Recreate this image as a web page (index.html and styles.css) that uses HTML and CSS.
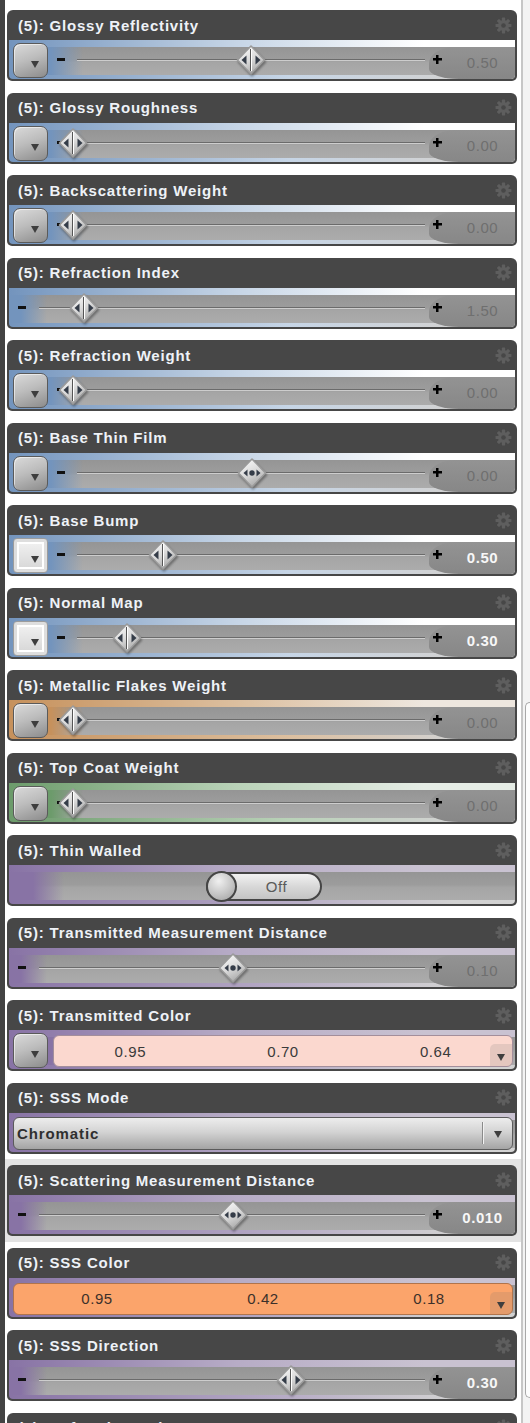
FILE: index.html
```html
<!DOCTYPE html>
<html>
<head>
<meta charset="utf-8">
<link rel="stylesheet" href="styles.css">
</head>
<body>
<svg class="defs" width="0" height="0" aria-hidden="true">
  <defs>
    <linearGradient id="kg" x1="0.2" y1="0" x2="0.7" y2="1">
      <stop offset="0" stop-color="#fafafa"/>
      <stop offset="0.5" stop-color="#dadada"/>
      <stop offset="1" stop-color="#a3a3a3"/>
    </linearGradient>
    <symbol id="knob" viewBox="0 0 30 32">
      <path d="M15 2 L28.5 16 L15 30 L1.5 16 Z" fill="url(#kg)" stroke="#9a9a9a" stroke-width="1.6" stroke-linejoin="round"/>
      <path d="M5.5 16 L10.5 11.5 L10.5 20.5 Z" fill="#343c48"/>
      <path d="M24.5 16 L19.5 11.5 L19.5 20.5 Z" fill="#343c48"/>
      <line x1="14.5" y1="5" x2="14.5" y2="27" stroke="#555" stroke-width="1"/>
      <line x1="15.5" y1="5" x2="15.5" y2="27" stroke="#fff" stroke-width="1"/>
    </symbol>
    <symbol id="knobdot" viewBox="0 0 30 32">
      <path d="M15 2 L28.5 16 L15 30 L1.5 16 Z" fill="url(#kg)" stroke="#9a9a9a" stroke-width="1.6" stroke-linejoin="round"/>
      <path d="M6.5 16 L10.5 12.5 L10.5 19.5 Z" fill="#343c48"/>
      <path d="M23.5 16 L19.5 12.5 L19.5 19.5 Z" fill="#343c48"/>
      <circle cx="15" cy="16" r="2.7" fill="#343c48"/>
    </symbol>
    <symbol id="gear" viewBox="-9 -9 18 18">
      <g fill="#5e5e5e">
        <circle r="5.8"/>
        <rect x="-1.7" y="-8.4" width="3.4" height="16.8" rx="0.6"/>
        <rect x="-1.7" y="-8.4" width="3.4" height="16.8" rx="0.6" transform="rotate(45)"/>
        <rect x="-1.7" y="-8.4" width="3.4" height="16.8" rx="0.6" transform="rotate(90)"/>
        <rect x="-1.7" y="-8.4" width="3.4" height="16.8" rx="0.6" transform="rotate(135)"/>
      </g>
      <circle r="2.4" fill="#474747"/>
    </symbol>
  </defs>
</svg>

<div class="app">
  <div class="lstrip"></div>
  <div class="list">

    <div class="row"><div class="card blue">
      <div class="hd"><span class="title">(5): Glossy Reflectivity</span><svg class="gear"><use href="#gear"/></svg></div>
      <div class="bd slider">
        <div class="ddbtn"><i class="tri"></i></div>
        <span class="minus"></span>
        <div class="track"><svg class="knob" style="left:50%"><use href="#knob"/></svg></div>
        <div class="vwrap"><span class="plus"></span><span class="val">0.50</span></div>
      </div>
    </div></div>

    <div class="row"><div class="card blue">
      <div class="hd"><span class="title">(5): Glossy Roughness</span><svg class="gear"><use href="#gear"/></svg></div>
      <div class="bd slider">
        <div class="ddbtn"><i class="tri"></i></div>
        <span class="minus"></span>
        <div class="track"><svg class="knob" style="left:0%"><use href="#knob"/></svg></div>
        <div class="vwrap"><span class="plus"></span><span class="val">0.00</span></div>
      </div>
    </div></div>

    <div class="row"><div class="card blue">
      <div class="hd"><span class="title">(5): Backscattering Weight</span><svg class="gear"><use href="#gear"/></svg></div>
      <div class="bd slider">
        <div class="ddbtn"><i class="tri"></i></div>
        <span class="minus"></span>
        <div class="track"><svg class="knob" style="left:0%"><use href="#knob"/></svg></div>
        <div class="vwrap"><span class="plus"></span><span class="val">0.00</span></div>
      </div>
    </div></div>

    <div class="row"><div class="card blue">
      <div class="hd"><span class="title">(5): Refraction Index</span><svg class="gear"><use href="#gear"/></svg></div>
      <div class="bd slider nob">
        <span class="minus"></span>
        <div class="track"><svg class="knob" style="left:12.4%"><use href="#knob"/></svg></div>
        <div class="vwrap"><span class="plus"></span><span class="val">1.50</span></div>
      </div>
    </div></div>

    <div class="row"><div class="card blue">
      <div class="hd"><span class="title">(5): Refraction Weight</span><svg class="gear"><use href="#gear"/></svg></div>
      <div class="bd slider">
        <div class="ddbtn"><i class="tri"></i></div>
        <span class="minus"></span>
        <div class="track"><svg class="knob" style="left:0%"><use href="#knob"/></svg></div>
        <div class="vwrap"><span class="plus"></span><span class="val">0.00</span></div>
      </div>
    </div></div>

    <div class="row"><div class="card blue">
      <div class="hd"><span class="title">(5): Base Thin Film</span><svg class="gear"><use href="#gear"/></svg></div>
      <div class="bd slider">
        <div class="ddbtn"><i class="tri"></i></div>
        <span class="minus"></span>
        <div class="track"><svg class="knob" style="left:50.3%"><use href="#knobdot"/></svg></div>
        <div class="vwrap"><span class="plus"></span><span class="val">0.00</span></div>
      </div>
    </div></div>

    <div class="row"><div class="card blue">
      <div class="hd"><span class="title">(5): Base Bump</span><svg class="gear"><use href="#gear"/></svg></div>
      <div class="bd slider">
        <div class="ddbtn img"><i class="tri"></i></div>
        <span class="minus"></span>
        <div class="track"><svg class="knob" style="left:25.3%"><use href="#knob"/></svg></div>
        <div class="vwrap"><span class="plus"></span><span class="val on">0.50</span></div>
      </div>
    </div></div>

    <div class="row"><div class="card blue">
      <div class="hd"><span class="title">(5): Normal Map</span><svg class="gear"><use href="#gear"/></svg></div>
      <div class="bd slider">
        <div class="ddbtn img"><i class="tri"></i></div>
        <span class="minus"></span>
        <div class="track"><svg class="knob" style="left:15.2%"><use href="#knob"/></svg></div>
        <div class="vwrap"><span class="plus"></span><span class="val on">0.30</span></div>
      </div>
    </div></div>

    <div class="row"><div class="card orange">
      <div class="hd"><span class="title">(5): Metallic Flakes Weight</span><svg class="gear"><use href="#gear"/></svg></div>
      <div class="bd slider">
        <div class="ddbtn"><i class="tri"></i></div>
        <span class="minus"></span>
        <div class="track"><svg class="knob" style="left:0%"><use href="#knob"/></svg></div>
        <div class="vwrap"><span class="plus"></span><span class="val">0.00</span></div>
      </div>
    </div></div>

    <div class="row"><div class="card green">
      <div class="hd"><span class="title">(5): Top Coat Weight</span><svg class="gear"><use href="#gear"/></svg></div>
      <div class="bd slider">
        <div class="ddbtn"><i class="tri"></i></div>
        <span class="minus"></span>
        <div class="track"><svg class="knob" style="left:0%"><use href="#knob"/></svg></div>
        <div class="vwrap"><span class="plus"></span><span class="val">0.00</span></div>
      </div>
    </div></div>

    <div class="row"><div class="card purple">
      <div class="hd"><span class="title">(5): Thin Walled</span><svg class="gear"><use href="#gear"/></svg></div>
      <div class="bd tog">
        <div class="toggle"><span class="tknob"></span><span class="toff">Off</span></div>
      </div>
    </div></div>

    <div class="row"><div class="card purple">
      <div class="hd"><span class="title">(5): Transmitted Measurement Distance</span><svg class="gear"><use href="#gear"/></svg></div>
      <div class="bd slider nob">
        <span class="minus"></span>
        <div class="track"><svg class="knob" style="left:50.3%"><use href="#knobdot"/></svg></div>
        <div class="vwrap"><span class="plus"></span><span class="val">0.10</span></div>
      </div>
    </div></div>

    <div class="row"><div class="card purple">
      <div class="hd"><span class="title">(5): Transmitted Color</span><svg class="gear"><use href="#gear"/></svg></div>
      <div class="bd fieldbd">
        <div class="ddbtn"><i class="tri"></i></div>
        <div class="field pink"><span>0.95</span><span>0.70</span><span>0.64</span><span class="fdd"><i class="tri"></i></span></div>
      </div>
    </div></div>

    <div class="row"><div class="card purple">
      <div class="hd"><span class="title">(5): SSS Mode</span><svg class="gear"><use href="#gear"/></svg></div>
      <div class="bd combobd">
        <div class="combo"><span class="ctext">Chromatic</span><span class="csep"></span><span class="carrow"><i class="tri"></i></span></div>
      </div>
    </div></div>

    <div class="row sel"><div class="card purple">
      <div class="hd"><span class="title">(5): Scattering Measurement Distance</span><svg class="gear"><use href="#gear"/></svg></div>
      <div class="bd slider nob">
        <span class="minus"></span>
        <div class="track"><svg class="knob" style="left:50.3%"><use href="#knobdot"/></svg></div>
        <div class="vwrap"><span class="plus"></span><span class="val on">0.010</span></div>
      </div>
    </div></div>

    <div class="row"><div class="card purple">
      <div class="hd"><span class="title">(5): SSS Color</span><svg class="gear"><use href="#gear"/></svg></div>
      <div class="bd fieldbd nobf">
        <div class="field orangef"><span>0.95</span><span>0.42</span><span>0.18</span><span class="fdd"><i class="tri"></i></span></div>
      </div>
    </div></div>

    <div class="row"><div class="card purple">
      <div class="hd"><span class="title">(5): SSS Direction</span><svg class="gear"><use href="#gear"/></svg></div>
      <div class="bd slider nob">
        <span class="minus"></span>
        <div class="track"><svg class="knob" style="left:65%"><use href="#knob"/></svg></div>
        <div class="vwrap"><span class="plus"></span><span class="val on">0.30</span></div>
      </div>
    </div></div>

    <div class="row"><div class="card purple">
      <div class="hd"><span class="title">(5): Refraction Color</span><svg class="gear"><use href="#gear"/></svg></div>
      <div class="bd fieldbd">
        <div class="ddbtn"><i class="tri"></i></div>
        <div class="field pink"><span>1.00</span><span>1.00</span><span>1.00</span><span class="fdd"><i class="tri"></i></span></div>
      </div>
    </div></div>

  </div>
  <div class="scroll"><div class="thumb"></div></div>
</div>
</body>
</html>
```

FILE: styles.css
```css
* { box-sizing: border-box; }
html, body { margin: 0; padding: 0; }
body {
  width: 530px;
  height: 1423px;
  overflow: hidden;
  background: #ffffff;
  font-family: "Liberation Sans", Arial, sans-serif;
}
.defs { position: absolute; width: 0; height: 0; overflow: hidden; }

.app { display: flex; height: 1423px; }
.lstrip { width: 5px; flex: none; background: #434343; }
.list { width: 516px; flex: none; padding-top: 4px; }
.scroll {
  width: 9px;
  flex: none;
  background: #f3f3f3;
  border-left: 2px solid #c6c6c6;
}
.thumb {
  margin-top: 702px;
  height: 696px;
  margin-left: 2px;
  border: 1px solid #a8a8a8;
  border-right: 0;
  border-radius: 5px 0 0 5px;
  background: #fdfdfd;
}

.row { height: 82.5px; padding: 6px 4px 0 2px; }
.row.sel { background: #e3e3e3; }

.card {
  height: 71px;
  background: #474747;
  border-radius: 6px 6px 5px 5px;
  padding: 0 2px 2px 2px;
  display: flex;
  flex-direction: column;
}
.blue   { --tint: #7394bd; --hi: #c6d5e6; --end: #ffffff; }
.orange { --tint: #c6915c; --hi: #dcbf9f; --end: #eee7df; }
.green  { --tint: #6c9b6b; --hi: #b9d2b8; --end: #e5ece5; }
.purple { --tint: #8873a5; --hi: #b7acc6; --end: #c9c2d1; }

.hd { height: 30px; flex: none; display: flex; align-items: center; padding-left: 9px; }
.title {
  flex: 1;
  color: #eef2f7;
  font-weight: bold;
  font-size: 15px;
  letter-spacing: 0.8px;
  white-space: nowrap;
}
.gear { width: 17px; height: 17px; margin-right: 3px; flex: none; }

.bd {
  height: 39px;
  flex: none;
  border-radius: 0 0 4px 4px;
  overflow: hidden;
  display: flex;
  --g0: 42px;
  --g1: 74px;
  background:
    linear-gradient(to right, var(--tint) 0%, var(--hi) 45%, var(--end) 82%) top / 100% 7px no-repeat,
    linear-gradient(to right, var(--tint) 0%, var(--hi) 55%, #d2d2d2 88%) bottom / 100% 4px no-repeat,
    linear-gradient(to right, var(--tint) var(--g0), rgba(150, 150, 150, 0) var(--g1)) 0 7px / 100% 28px no-repeat,
    linear-gradient(#959595, #9c9c9c 45%, #a5a5a5 55%, #acacac) 0 7px / 100% 28px no-repeat,
    var(--tint);
}

/* dropdown button */
.ddbtn {
  width: 35px;
  height: 35px;
  flex: none;
  margin-top: 3px;
  border: 1px solid #5a5a5a;
  border-radius: 7px;
  background: linear-gradient(160deg, #dadada 0%, #bdbdbd 45%, #8c8c8c 100%);
  box-shadow: inset 1px 1px 0 rgba(255, 255, 255, 0.55);
  display: flex;
  justify-content: flex-end;
  align-items: flex-end;
  padding: 0 8px 9px 0;
}
.ddbtn.img {
  border-color: #9c9c9c;
  border-radius: 4px;
  background: linear-gradient(#f4f4f4, #d4d4d4);
  box-shadow: inset 0 0 0 3px #dedede, inset 0 0 0 5px #ffffff;
}
.tri {
  display: block;
  width: 0;
  height: 0;
  border-left: 4px solid transparent;
  border-right: 4px solid transparent;
  border-top: 7px solid #3e3e3e;
}

/* slider */
.slider { padding-left: 4px; }
.slider.nob { padding-left: 9px; --g0: 12px; --g1: 38px; }
.minus {
  width: 8px;
  height: 3px;
  flex: none;
  margin: 18px 0 0 9px;
  background: #111;
}
.nob .minus { margin-left: 0; }
.track {
  flex: 1;
  position: relative;
  margin-left: 8px;
  background:
    linear-gradient(#6b6b6b, #6b6b6b) 4px 19px / calc(100% - 8px) 1px no-repeat,
    linear-gradient(#cdcdcd, #cdcdcd) 4px 20px / calc(100% - 8px) 1px no-repeat;
}
.nob .track { margin-left: 9px; }
.knob {
  position: absolute;
  top: 4px;
  width: 30px;
  height: 32px;
  margin-left: -15px;
  filter: drop-shadow(1px 2px 1px rgba(0, 0, 0, 0.35));
}
.vwrap {
  width: 86px;
  flex: none;
  margin-top: 7px;
  display: flex;
  align-items: flex-start;
  background: linear-gradient(#939393, #878787);
  border-radius: 26px 0 4px 30px / 16px 0 4px 10px;
}
.plus {
  width: 17px;
  height: 9px;
  flex: none;
  margin-top: 8px;
  background:
    linear-gradient(#000, #000) center / 9px 2.5px no-repeat,
    linear-gradient(#000, #000) center / 2.5px 9px no-repeat;
}
.val {
  flex: 1;
  padding-left: 4px;
  text-align: center;
  line-height: 32px;
  font-size: 15px;
  letter-spacing: 0.6px;
  color: #6f6f6f;
}
.val.on { color: #f7f7f7; font-weight: bold; }

/* toggle */
.tog { justify-content: center; align-items: center; padding-top: 4px; padding-left: 4px; --g0: 24px; --g1: 55px; }
.toggle {
  width: 116px;
  height: 29px;
  display: flex;
  align-items: center;
  border: 2px solid #454545;
  border-radius: 15px;
  background: linear-gradient(#f2f2f2, #d8d8d8 50%, #c4c4c4);
}
.tknob {
  width: 31px;
  height: 31px;
  flex: none;
  margin-left: -2px;
  border: 2px solid #454545;
  border-radius: 50%;
  background: radial-gradient(circle at 40% 30%, #f0f0f0, #c4c4c4 55%, #9c9c9c);
}
.toff {
  flex: 1;
  text-align: center;
  font-size: 15px;
  letter-spacing: 0.6px;
  color: #5a5a5a;
  padding-right: 4px;
}

/* color fields */
.fieldbd {
  padding: 5px 2px 2px 4px;
  align-items: flex-start;
}
.fieldbd .ddbtn { margin-top: -2px; }
.field {
  flex: 1;
  height: 32px;
  margin-left: 5px;
  border-radius: 6px;
  display: flex;
  align-items: center;
  position: relative;
  font-size: 15px;
  letter-spacing: 0.6px;
  color: #3a3a3a;
}
.nobf .field { margin-left: 0; }
.field span { flex: 1; text-align: center; }
.field.pink { background: #fbd8cf; border: 1px solid #a38e9b; }
.field.orangef { background: #fba46b; border: 1px solid #b0744c; color: #3b302a; }
.field .fdd {
  position: absolute;
  right: 0;
  bottom: 0;
  width: 22px;
  height: 22px;
  flex: none;
  border-radius: 5px 0 5px 0;
  background: rgba(110, 110, 110, 0.16);
  display: flex;
  justify-content: center;
  align-items: flex-end;
  padding-bottom: 5px;
}

/* combo */
.combobd { padding: 4px 2px 2px 4px; }
.combo {
  flex: 1;
  height: 33px;
  border: 1px solid #5b5b5b;
  border-radius: 6px;
  background: linear-gradient(#ededed, #d3d3d3 45%, #a4a4a4);
  display: flex;
  align-items: center;
  padding-left: 3px;
}
.ctext {
  flex: 1;
  font-weight: bold;
  font-size: 15px;
  letter-spacing: 0.9px;
  color: #2f2f2f;
}
.csep {
  width: 2px;
  height: 22px;
  flex: none;
  border-left: 1px solid #8a8a8a;
  border-right: 1px solid #f2f2f2;
}
.carrow {
  width: 28px;
  flex: none;
  display: flex;
  justify-content: center;
  padding-top: 2px;
}
```
